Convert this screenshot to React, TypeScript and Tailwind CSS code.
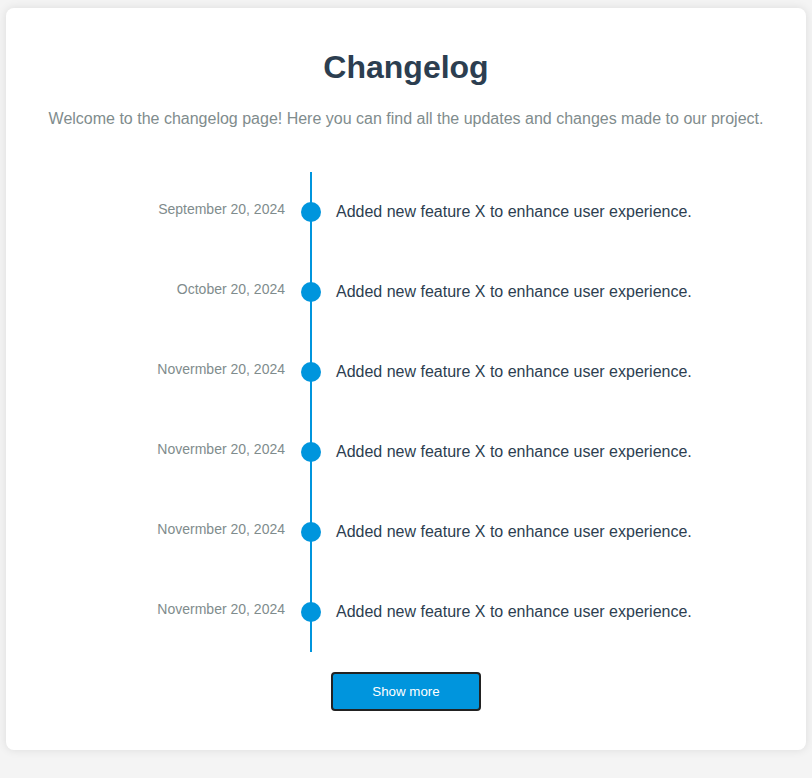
import React from "react";

const items = [
  "September 20, 2024",
  "October 20, 2024",
  "Novermber 20, 2024",
  "Novermber 20, 2024",
  "Novermber 20, 2024",
  "Novermber 20, 2024",
];

export default function App() {
  return (
    <div
      className="min-h-screen bg-[#f4f4f4] pt-2 pb-6"
      style={{ fontFamily: '"Liberation Sans", Arial, Helvetica, sans-serif' }}
    >
      <div className="mx-auto max-w-[800px] rounded-lg bg-white px-10 pt-[41px] pb-[39px] shadow-[0_0_10px_rgba(0,0,0,0.1)]">
        <h1 className="text-center text-[32px] font-bold leading-[37px] text-[#2c3e50]">
          Changelog
        </h1>
        <p className="mt-6 text-center text-[16px] leading-[18px] text-[#7f8c8d]">
          Welcome to the changelog page! Here you can find all the updates and changes made to our project.
        </p>
        <div className="mt-[44px] flex flex-col">
          {items.map((d, i) => (
            <div key={i} className="flex h-20 items-stretch">
              <div className="flex w-[255px] shrink-0 items-center justify-end pr-4">
                <span className="relative -top-[3px] text-[14px] leading-[16px] text-[#7f8c8d]">{d}</span>
              </div>
              <div className="relative flex w-5 shrink-0 items-center justify-center">
                <div className="absolute left-[9px] top-0 bottom-0 w-[2px] bg-[#0095dd]" />
                <div className="relative h-5 w-5 rounded-full bg-[#0095dd]" />
              </div>
              <div className="flex items-center pl-[15px]">
                <span className="text-[16px] leading-[18px] text-[#2c3e50]">
                  Added new feature X to enhance user experience.
                </span>
              </div>
            </div>
          ))}
        </div>
        <div className="mt-5 flex justify-center">
          <button className="h-[39px] w-[150px] rounded-[4px] border-2 border-[#222] bg-[#0095dd] text-[13.33px] text-white">
            Show more
          </button>
        </div>
      </div>
    </div>
  );
}
